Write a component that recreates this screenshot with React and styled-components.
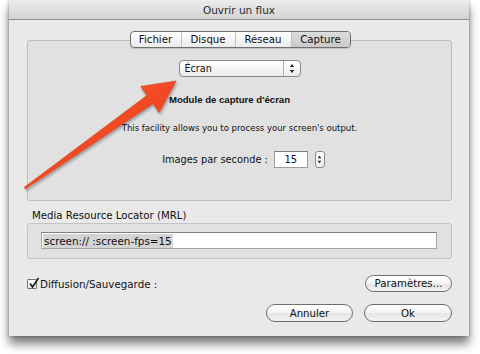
import React from 'react';
import styled, { createGlobalStyle } from 'styled-components';

const Global = createGlobalStyle`
  html, body { margin: 0; padding: 0; background: #ffffff; }
  body {
    width: 480px; height: 354px; overflow: hidden;
    font-family: "DejaVu Sans", "Liberation Sans", sans-serif;
    color: #111;
  }
`;

const Stage = styled.div`
  position: relative;
  width: 480px;
  height: 354px;
  background: #fff;
`;

const Window = styled.div`
  margin-left: 9px;
  width: 460px;
  height: 336px;
  background: #e9e9e9;
  box-shadow: 0 8px 9px rgba(0, 0, 0, 0.5), 0 0 3px rgba(0, 0, 0, 0.35);
  display: flex;
  flex-direction: column;
`;

const TitleBar = styled.div`
  height: 19px;
  border-bottom: 1px solid #8e8e8e;
  background: linear-gradient(#ececec, #d4d4d4);
  display: flex;
  align-items: center;
  justify-content: center;
  font-size: 10.5px;
  color: #2a2a2a;
`;

const Content = styled.div`
  flex: 1;
  display: flex;
  flex-direction: column;
  padding: 11px 17px 0 18px;
`;

const TabBar = styled.div`
  position: relative;
  z-index: 1;
  align-self: center;
  margin-left: 1px;
  display: flex;
  height: 17px;
  box-sizing: border-box;
  border: 1px solid #6f6f6f;
  border-radius: 4px;
  overflow: hidden;
  background: linear-gradient(#ffffff, #ebebeb);
  box-shadow: 0 1px 1px rgba(0,0,0,0.15);
`;

const Tab = styled.div`
  width: ${p => p.$w}px;
  display: flex;
  align-items: center;
  justify-content: center;
  font-size: 10.2px;
  color: #111;
  border-left: ${p => (p.$first ? 'none' : '1px solid #c2c2c2')};
  background: ${p => (p.$active ? 'linear-gradient(#dcdcdc, #cacaca)' : 'transparent')};
`;

const GroupBox = styled.div`
  margin-top: -8px;
  height: 161px;
  box-sizing: border-box;
  border: 1px solid #bebebe;
  border-radius: 3px;
  background: #e1e1e1;
  display: flex;
  flex-direction: column;
  align-items: center;
  padding-top: 19px;
`;

const Popup = styled.div`
  width: 122px;
  height: 17px;
  box-sizing: border-box;
  border: 1px solid #8a8a8a;
  border-radius: 4px;
  background: linear-gradient(#ffffff, #ececec);
  display: flex;
  font-size: 9.6px;
`;

const PopupLabel = styled.div`
  flex: 1;
  display: flex;
  align-items: center;
  padding-left: 5px;
`;

const PopupArrows = styled.div`
  width: 16px;
  border-left: 1px solid #b0b0b0;
  display: flex;
  align-items: center;
  justify-content: center;
`;

const ModuleTitle = styled.div`
  margin-top: 17px;
  margin-right: 20px;
  font-family: "Liberation Sans", "DejaVu Sans", sans-serif;
  font-weight: bold;
  font-size: 9.6px;
  line-height: 12px;
  white-space: nowrap;
`;

const Description = styled.div`
  margin-top: 17px;
  font-size: 8.5px;
  line-height: 11px;
`;

const FpsRow = styled.div`
  margin-top: 17px;
  margin-left: 8px;
  display: flex;
  align-items: center;
  height: 17px;
`;

const FpsLabel = styled.span`
  font-size: 9.8px;
  margin-right: 6px;
`;

const NumberField = styled.div`
  width: 34px;
  height: 17px;
  box-sizing: border-box;
  border: 1px solid #9c9c9c;
  border-top-color: #7d7d7d;
  background: #fff;
  display: flex;
  align-items: center;
  justify-content: center;
  font-size: 10px;
  margin-right: 7px;
`;

const Stepper = styled.div`
  width: 10px;
  height: 17px;
  box-sizing: border-box;
  border: 1px solid #8a8a8a;
  border-radius: 3px;
  background: linear-gradient(#ffffff, #ececec);
  display: flex;
  align-items: center;
  justify-content: center;
`;

const SectionLabel = styled.div`
  margin-top: 9px;
  padding-left: 5px;
  font-size: 10.2px;
  line-height: 12px;
`;

const MrlBox = styled.div`
  margin-top: 1px;
  height: 36px;
  box-sizing: border-box;
  border: 1px solid #c4c4c4;
  border-radius: 3px;
  background: #e1e1e1;
  padding: 8px 14px 0 13px;
`;

const TextField = styled.div`
  height: 17px;
  box-sizing: border-box;
  border: 1px solid #a4a4a4;
  border-top-color: #7f7f7f;
  background: #fff;
  display: flex;
  align-items: center;
  padding-left: 1px;
  font-size: 10.4px;
`;

const Selection = styled.span`
  background: #d4d4d4;
  padding: 1px 1px;
`;

const Row = styled.div`
  margin-top: ${p => p.$mt}px;
  display: flex;
  align-items: center;
  justify-content: ${p => p.$justify || 'space-between'};
  gap: ${p => p.$gap || 0}px;
`;

const CheckWrap = styled.label`
  display: flex;
  align-items: center;
  font-size: 10.3px;
  gap: 3px;
`;

const CheckBox = styled.div`
  width: 10px;
  height: 10px;
  box-sizing: border-box;
  border: 1px solid #777;
  border-radius: 1px;
  background: linear-gradient(#ffffff, #e8e8e8);
  position: relative;
`;

const CheckMark = styled.svg`
  position: absolute;
  left: 0px;
  top: -3px;
`;

const PillButton = styled.div`
  width: ${p => p.$w}px;
  height: ${p => p.$h}px;
  box-sizing: border-box;
  border: 1px solid #6e6e6e;
  border-radius: 9px;
  background: linear-gradient(#ffffff 0%, #f3f3f3 50%, #e4e4e4 51%, #f2f2f2 100%);
  display: flex;
  align-items: center;
  justify-content: center;
  font-size: 10.2px;
  color: #111;
`;

const ArrowLayer = styled.svg`
  position: absolute;
  left: 0;
  top: 0;
  pointer-events: none;
`;

const tabs = [
  { label: 'Fichier', w: 50 },
  { label: 'Disque', w: 53 },
  { label: 'Réseau', w: 55 },
  { label: 'Capture', w: 58, active: true },
];

function UpDown({ w = 6, h = 11 }) {
  return (
    <svg width={w} height={h} viewBox="0 0 6 11">
      <path d="M3 1 L5.2 4 L0.8 4 Z" fill="#222" />
      <path d="M3 10 L5.2 7 L0.8 7 Z" fill="#222" />
    </svg>
  );
}

export default function App() {
  return (
    <Stage>
      <Global />
      <Window>
        <TitleBar>Ouvrir un flux</TitleBar>
        <Content>
          <TabBar>
            {tabs.map((t, i) => (
              <Tab key={t.label} $w={t.w} $first={i === 0} $active={t.active}>
                {t.label}
              </Tab>
            ))}
          </TabBar>
          <GroupBox>
            <Popup>
              <PopupLabel>Écran</PopupLabel>
              <PopupArrows>
                <UpDown />
              </PopupArrows>
            </Popup>
            <ModuleTitle>Module de capture d'écran</ModuleTitle>
            <Description>This facility allows you to process your screen's output.</Description>
            <FpsRow>
              <FpsLabel>Images par seconde :</FpsLabel>
              <NumberField>15</NumberField>
              <Stepper>
                <UpDown w={5} h={11} />
              </Stepper>
            </FpsRow>
          </GroupBox>
          <SectionLabel>Media Resource Locator (MRL)</SectionLabel>
          <MrlBox>
            <TextField>
              <Selection>screen:// :screen-fps=15</Selection>
            </TextField>
          </MrlBox>
          <Row $mt={16}>
            <CheckWrap>
              <CheckBox>
                <CheckMark width="12" height="12" viewBox="0 0 12 12">
                  <path d="M2 6.5 L4.5 10 L10.5 1" fill="none" stroke="#1a1a1a" strokeWidth="1.6" />
                </CheckMark>
              </CheckBox>
              Diffusion/Sauvegarde :
            </CheckWrap>
            <PillButton $w={87} $h={17}>Paramètres...</PillButton>
          </Row>
          <Row $mt={12} $justify="flex-end" $gap={11}>
            <PillButton $w={87} $h={18}>Annuler</PillButton>
            <PillButton $w={88} $h={18}>Ok</PillButton>
          </Row>
        </Content>
      </Window>
      <ArrowLayer width="480" height="354" viewBox="0 0 480 354">
        <defs>
          <linearGradient id="arrowFill" x1="0" y1="0" x2="1" y2="1">
            <stop offset="0" stopColor="#ff6e40" />
            <stop offset="0.5" stopColor="#f24a24" />
            <stop offset="1" stopColor="#e33714" />
          </linearGradient>
          <filter id="arrowShadow" x="-10%" y="-10%" width="130%" height="130%">
            <feDropShadow dx="1" dy="2" stdDeviation="1.5" floodColor="#000" floodOpacity="0.35" />
          </filter>
        </defs>
        <path
          d="M24.4 187.2 L146.8 95.6 L140.8 86.4 L176 81 L159 112.6 L153 103.4 L25.6 188.8 Q24.6 188.6 24.4 187.2 Z"
          fill="url(#arrowFill)"
          stroke="#d63a18"
          strokeWidth="0.6"
          strokeLinejoin="round"
          filter="url(#arrowShadow)"
        />
      </ArrowLayer>
    </Stage>
  );
}
